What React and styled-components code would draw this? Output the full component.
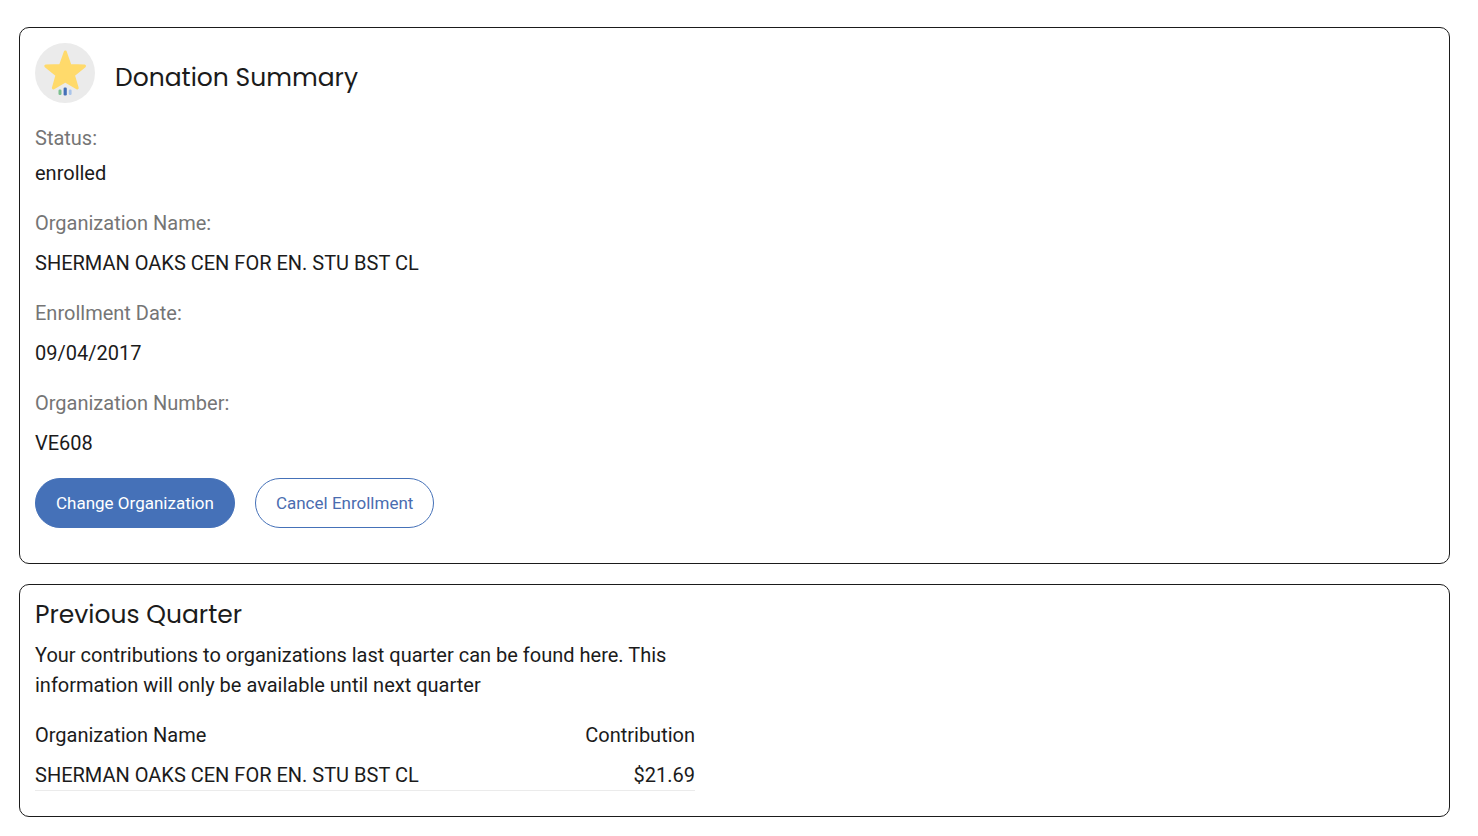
import styled, { createGlobalStyle } from "styled-components";

const details = [
    { label: "Status:", value: "enrolled", compact: true },
    { label: "Organization Name:", value: "SHERMAN OAKS CEN FOR EN. STU BST CL" },
    { label: "Enrollment Date:", value: "09/04/2017" },
    { label: "Organization Number:", value: "VE608" },
];

const contributions = [
    { name: "SHERMAN OAKS CEN FOR EN. STU BST CL", amount: "$21.69" },
];

function StarBadge() {
    return (
        <Badge viewBox="0 0 60 60" aria-hidden="true">
            <circle cx="30" cy="30" r="30" fill="#EBEBEB" />
            <path
                d="M30.3 9L35 22.4L49.5 23L38.4 32.2L42.2 45L30.3 38L18.4 45L22 32.2L10.8 23L25.5 22.4Z"
                fill="#FFDA6B"
                stroke="#FFDA6B"
                strokeWidth="3"
                strokeLinejoin="round"
            />
            <path d="M22 49Q30 38 38 49V52H22Z" fill="#EBEBEB" />
            <rect x="23.5" y="46.5" width="3" height="5.5" rx="1.2" fill="#7CBF8E" />
            <rect x="28.6" y="44.5" width="3.2" height="8" rx="1.2" fill="#4470B8" />
            <rect x="33.8" y="46.5" width="2.8" height="5.5" rx="1.2" fill="#A9C4EA" />
        </Badge>
    );
}

export default function App() {
    return (
        <Page>
            <GlobalStyle />
            <Card>
                <CardHeader>
                    <StarBadge />
                    <Title>Donation Summary</Title>
                </CardHeader>
                <DetailList>
                    {details.map((detail) => (
                        <Detail key={detail.label} $compact={detail.compact}>
                            <dt>{detail.label}</dt>
                            <dd>{detail.value}</dd>
                        </Detail>
                    ))}
                </DetailList>
                <Actions>
                    <Button type="button" $primary>Change Organization</Button>
                    <Button type="button">Cancel Enrollment</Button>
                </Actions>
            </Card>
            <Card>
                <Title>Previous Quarter</Title>
                <Description>
                    Your contributions to organizations last quarter can be found here. This
                    information will only be available until next quarter
                </Description>
                <ContributionTable>
                    <thead>
                        <tr>
                            <th scope="col">Organization Name</th>
                            <th scope="col">Contribution</th>
                        </tr>
                    </thead>
                    <tbody>
                        {contributions.map((item) => (
                            <tr key={item.name}>
                                <td>{item.name}</td>
                                <td>{item.amount}</td>
                            </tr>
                        ))}
                    </tbody>
                </ContributionTable>
            </Card>
        </Page>
    );
}

const GlobalStyle = createGlobalStyle`
* {
    box-sizing: border-box;
}
body {
    margin: 0;
    background: #FFFFFF;
    color: #1B1B1B;
    font-family: Roboto, "Liberation Sans", sans-serif;
    font-size: 20px;
    line-height: 30px;
}
`

const Page = styled.main`
display: flex;
flex-direction: column;
gap: 20px;
padding: 27px 28px 19px 19px;
`

const Card = styled.section`
padding: 15px;
border: 1px solid #1B1B1B;
border-radius: 10px;
`

const CardHeader = styled.header`
display: flex;
align-items: center;
gap: 20px;
margin-bottom: 20px;
h2 {
    padding-top: 10px;
}
`

const Badge = styled.svg`
flex: none;
width: 60px;
height: 60px;
`

const Title = styled.h2`
margin: 0;
font-family: Poppins, Inter, sans-serif;
font-size: 25px;
font-weight: 400;
line-height: 30px;
`

const DetailList = styled.dl`
display: flex;
flex-direction: column;
gap: 20px;
margin: 0 0 20px;
`

const Detail = styled.div`
display: flex;
flex-direction: column;
gap: ${({ $compact }) => ($compact ? "5px" : "10px")};
dt {
    color: #757575;
}
dd {
    margin: 0;
}
`

const Actions = styled.div`
display: flex;
flex-wrap: wrap;
gap: 20px;
margin-bottom: 20px;
`

const Button = styled.button`
height: 50px;
padding: 0 20px;
border: 1px solid #4571B8;
border-radius: 25px;
background: ${({ $primary }) => ($primary ? "#4571B8" : "#FFFFFF")};
color: ${({ $primary }) => ($primary ? "#FFFFFF" : "#4A6CB0")};
font-family: inherit;
font-size: 17px;
cursor: pointer;
`

const Description = styled.p`
max-width: 660px;
margin: 10px 0 20px;
`

const ContributionTable = styled.table`
width: 100%;
max-width: 660px;
margin-bottom: 10px;
border-spacing: 0;
th, td {
    padding: 0;
    font-weight: 400;
    text-align: left;
}
th:last-child, td:last-child {
    text-align: right;
}
td {
    padding-top: 10px;
    border-bottom: 1px solid #EBEBEB;
}
`
